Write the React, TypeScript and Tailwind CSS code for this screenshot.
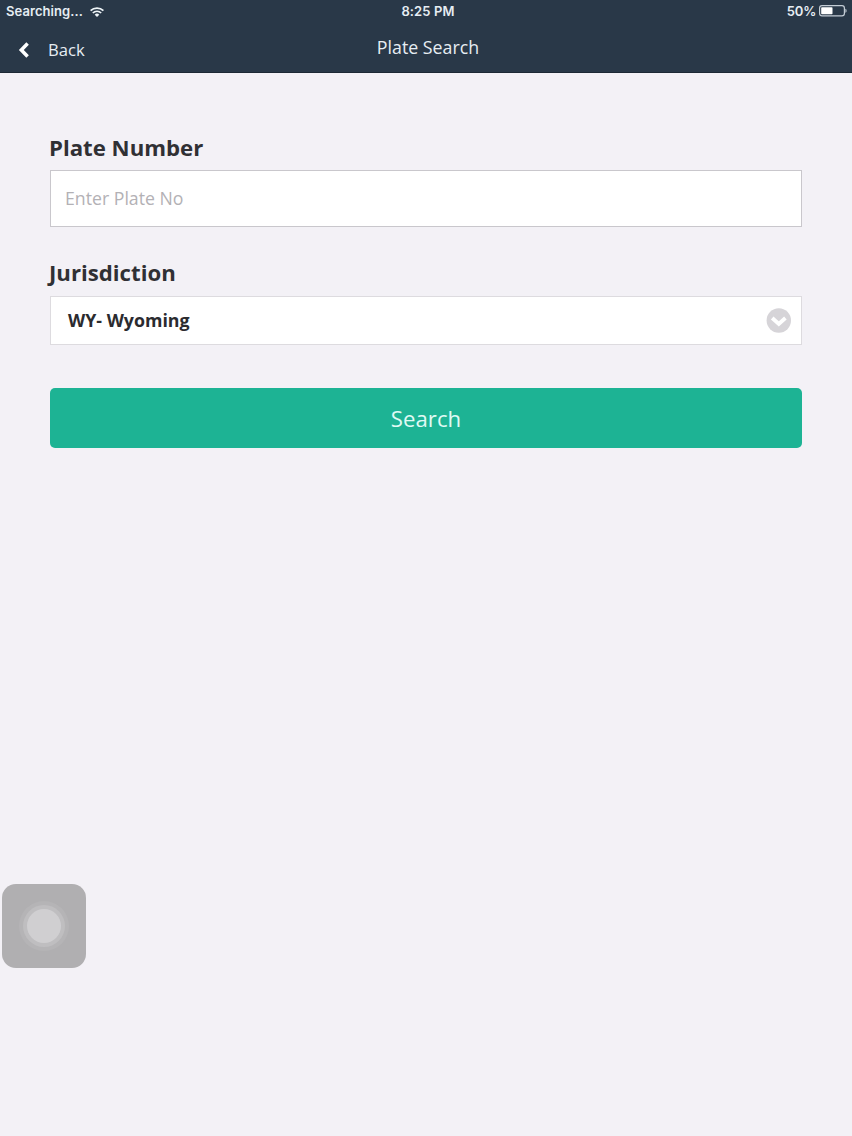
import React, { useState } from "react";

const WifiIcon: React.FC = () => (
  <svg width="14" height="10" viewBox="0 0 14 10" fill="none" className="ml-[7px]">
    <path d="M0.6 3.7a9 9 0 0 1 12.8 0" stroke="#eef4f8" strokeWidth="1.7" />
    <path d="M2.8 6a5.9 5.9 0 0 1 8.4 0" stroke="#eef4f8" strokeWidth="1.6" />
    <path d="M4.7 7.8a3.2 3.2 0 0 1 4.6 0L7 10z" fill="#eef4f8" />
  </svg>
);

const BatteryIcon: React.FC = () => (
  <svg width="28" height="12" viewBox="0 0 28 12" fill="none" className="mb-[1px] ml-[3px]">
    <rect x="0.6" y="0.6" width="24.8" height="10.3" rx="2.4" stroke="#c3ccd5" strokeWidth="1.2" />
    <rect x="2.2" y="2.2" width="11.3" height="7.1" rx="0.8" fill="#fff" />
    <path d="M26.4 3.7c1.6.5 1.6 3.6 0 4.1z" fill="#c3ccd5" />
  </svg>
);

const StatusBar: React.FC = () => (
  <div className="grid h-[23px] grid-cols-3 items-center pl-[6px] pr-[5px] font-['Inter','Liberation_Sans',sans-serif] text-[13px] leading-[23px] font-semibold text-[#e6edf3]">
    <div className="flex items-center">
      <span className="tracking-[0.07px]">Searching...</span>
      <WifiIcon />
    </div>
    <div className="pl-[3px] text-center tracking-[0.1px]">8:25 PM</div>
    <div className="flex items-center justify-end">
      <span className="tracking-[-0.2px]">50%</span>
      <BatteryIcon />
    </div>
  </div>
);

const Header: React.FC = () => (
  <header className="h-[73px] border-b border-[#1d2935] bg-[#293848]">
    <StatusBar />
    <div className="grid h-12 grid-cols-3 text-[#e6edf3]">
      <button className="flex h-[54px] items-center pl-[18px] text-left text-[16.6px]">
        <svg width="11" height="16" viewBox="0 0 11 16" fill="none">
          <path d="M9.6 1.5L3.3 8l6.3 6.5" stroke="#fff" strokeWidth="3.5" />
        </svg>
        <span className="ml-[19px]">Back</span>
      </button>
      <h1 className="pl-[4px] text-center text-[17.8px] leading-[49px]">Plate Search</h1>
    </div>
  </header>
);

const App: React.FC = () => {
  const [plate, setPlate] = useState("");

  return (
    <div className="relative h-[1136px] w-[852px] overflow-hidden bg-[#f3f1f6] font-['Open_Sans','Noto_Sans',sans-serif]">
      <Header />

      <main className="px-[50px] pt-[60px]">
        <label htmlFor="plate" className="-ml-px block h-[37px] text-[22.2px] leading-[30px] font-bold text-[#303034]">
          Plate Number
        </label>
        <input
          id="plate"
          type="text"
          value={plate}
          onChange={(e) => setPlate(e.target.value)}
          placeholder="Enter Plate No"
          className="block h-[57px] w-full border border-[#c9c7cc] bg-white px-[14px] pb-[2px] text-[17.7px] text-[#303034] placeholder:text-[#b3b1b5] focus:outline-none"
        />

        <p className="mt-[31px] -ml-px h-[38px] text-[22.2px] leading-[30px] font-bold text-[#303034]">Jurisdiction</p>
        <button className="flex h-[49px] w-full items-center justify-between border border-[#dddbdf] bg-white pr-[10px] pl-[17px] text-[17.8px] font-bold text-[#2b2b2f]">
          <span>WY- Wyoming</span>
          <svg width="25" height="25" viewBox="0 0 25 25" fill="none">
            <circle cx="12.8" cy="12.5" r="12.2" fill="#d6d4d8" />
            <path d="M6.2 10l6.6 6 6.6-6" stroke="#fff" strokeWidth="3.8" />
          </svg>
        </button>

        <button className="mt-[43px] block h-[60px] w-full rounded-[5px] bg-[#1db394] pt-[1px] text-center text-[22.2px] text-[#e0faf4]">
          Search
        </button>
      </main>

      {/* floating assistive touch button */}
      <div className="absolute top-[884px] left-[2px] flex h-[84px] w-[84px] items-center justify-center rounded-[14px] bg-[#b0afb1]">
        <div className="flex h-[50px] w-[50px] items-center justify-center rounded-full bg-[#b5b4b6]">
          <div className="flex h-[42px] w-[42px] items-center justify-center rounded-full bg-[#bfbec0]">
            <div className="h-[34px] w-[34px] rounded-full bg-[#d0cfd1]" />
          </div>
        </div>
      </div>
    </div>
  );
};

export default App;
